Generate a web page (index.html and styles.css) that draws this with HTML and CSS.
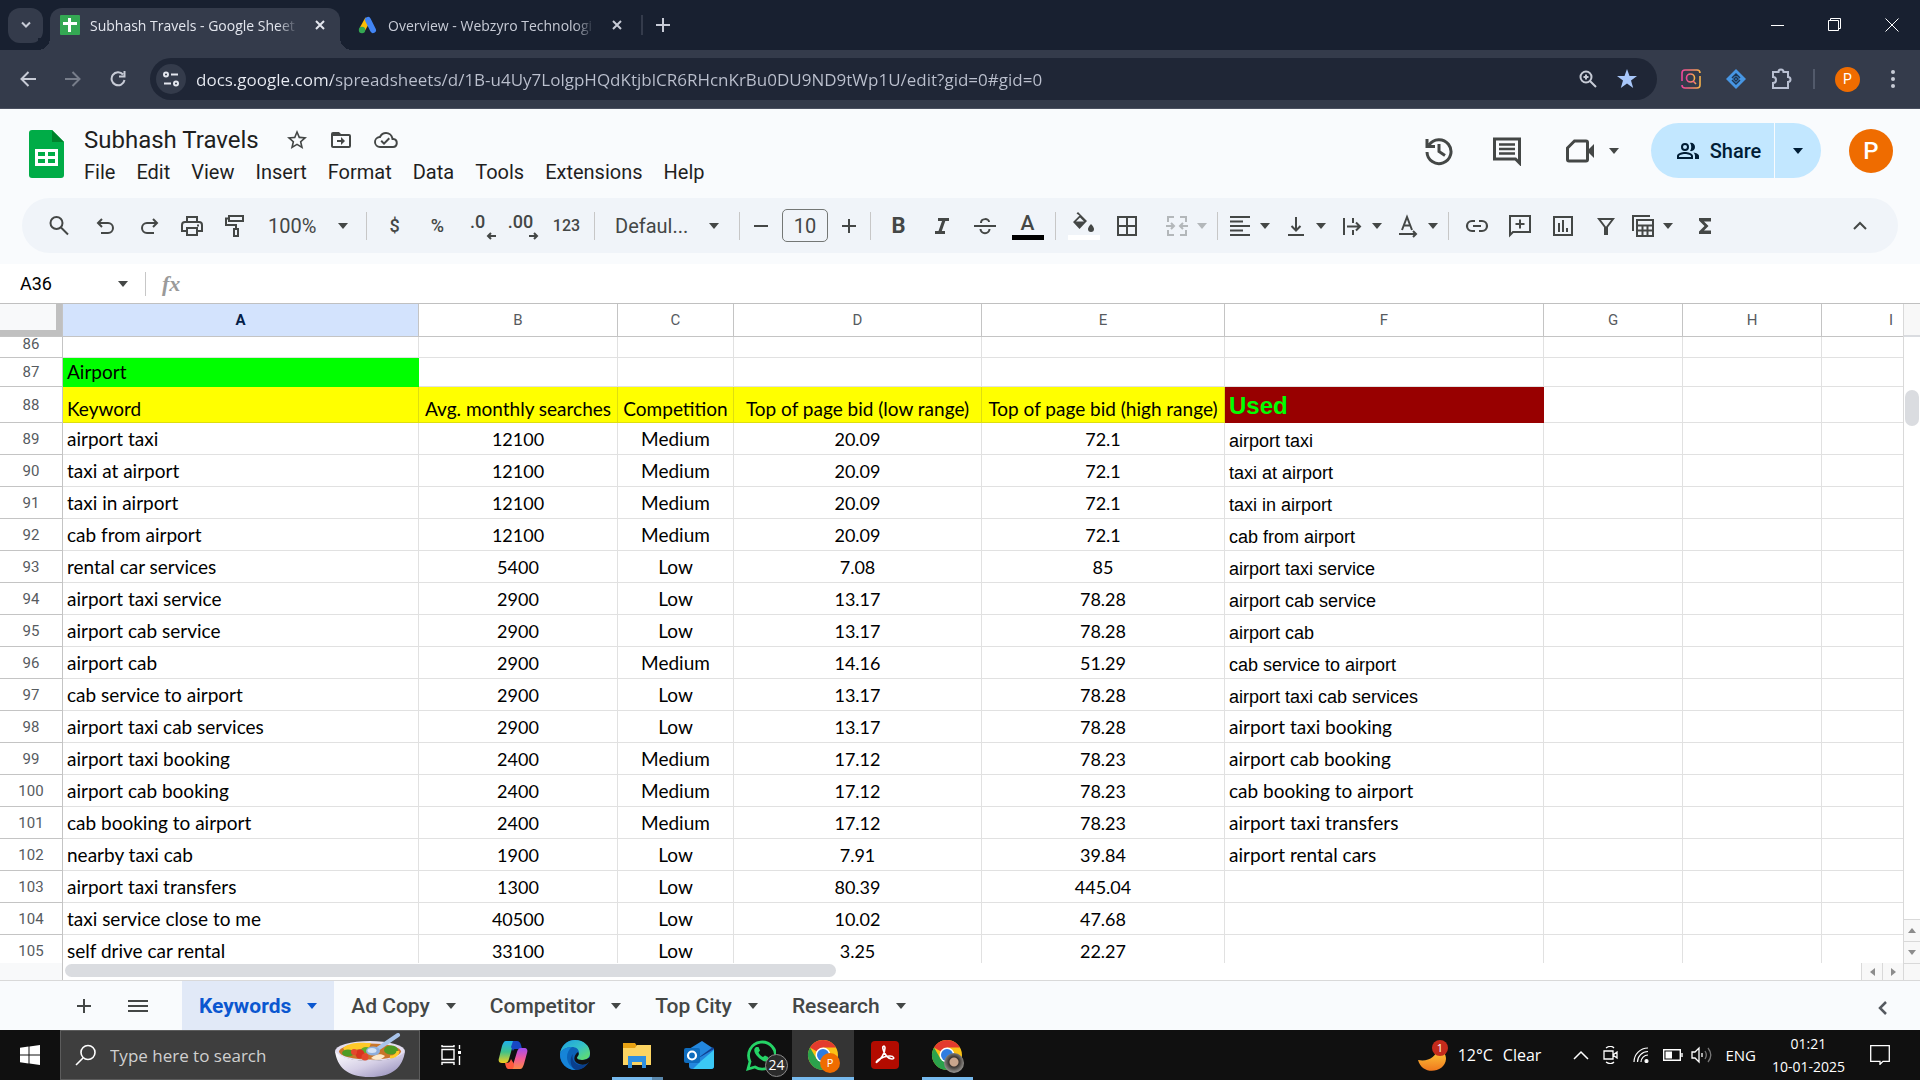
FILE: index.html
```html
<!DOCTYPE html>
<html lang="en">
<head>
  <meta charset="UTF-8" />
  <meta name="viewport" content="width=device-width, initial-scale=1.0" />
  <title>Subhash Travels - Google Sheets</title>
  <link rel="stylesheet" href="styles.css">
</head>
<body>
  <!-- shared icons -->
  <svg class="sprite" aria-hidden="true">
    <symbol id="arrow" viewBox="0 0 10 6"><path d="M0 0h10L5 6z"/></symbol>
    <symbol id="close" viewBox="0 0 10 10"><path d="M1 1l8 8M9 1L1 9" fill="none" stroke="currentColor" stroke-width="2"/></symbol>
    <symbol id="chrome" viewBox="0 0 32 32">
      <circle cx="16" cy="16" r="15" fill="#fbc116"/>
      <path d="M16 16L3 8.500A15 15 0 0 1 29 8.500H16z" fill="#e33b2e"/>
      <path d="M3 8.500A15 15 0 0 0 16 31l6.500-11.300L9.500 19.700z" fill="#2ba24c"/>
      <circle cx="16" cy="16" r="7.500" fill="#fff"/>
      <circle cx="16" cy="16" r="6" fill="#2f7de1"/>
    </symbol>
    <linearGradient id="gEdge" x1="0" y1="0" x2="1" y2="1"><stop offset="0" stop-color="#1b9de2"/><stop offset=".5" stop-color="#35c1c8"/><stop offset="1" stop-color="#6be35a"/></linearGradient>
    <linearGradient id="gBlue" x1="0" y1="0" x2="0" y2="1"><stop offset="0" stop-color="#1fb0ee"/><stop offset=".5" stop-color="#3fc28a"/><stop offset="1" stop-color="#f6cf1d"/></linearGradient>
    <linearGradient id="gPink" x1="0" y1="0" x2="0" y2="1"><stop offset="0" stop-color="#a24df0"/><stop offset=".5" stop-color="#f0599a"/><stop offset="1" stop-color="#fb8a45"/></linearGradient>
    <linearGradient id="gInsta" x1="0" y1="0" x2="1" y2="0"><stop offset="0" stop-color="#f0459a"/><stop offset="1" stop-color="#f7b24a"/></linearGradient>
    <linearGradient id="gMoon" x1="0" y1="0" x2="0" y2="1"><stop offset="0" stop-color="#ffd23c"/><stop offset="1" stop-color="#f0781e"/></linearGradient>
    <linearGradient id="gBowl" x1="0" y1="0" x2="1" y2="1"><stop offset="0" stop-color="#fff"/><stop offset=".5" stop-color="#d5cfe6"/><stop offset="1" stop-color="#8d86b5"/></linearGradient>
  </svg>

  <div class="tabstrip">
    <button class="tab-search" aria-label="Search tabs"><svg width="10" height="8" viewBox="0 0 10 8"><path d="M1 1.500l4 4 4-4" fill="none" stroke="currentColor" stroke-width="2"/></svg></button>
    <div class="browser-tab active">
      <svg width="20" height="20" viewBox="0 0 20 20"><rect width="20" height="20" rx="1" fill="#34a853"/><path d="M9.500 3v14M3 8.500h14" stroke="#fff" stroke-width="3"/></svg>
      <span class="tab-title">Subhash Travels - Google Sheet</span>
      <button class="tab-close" aria-label="Close tab"><svg width="10" height="10"><use href="#close"/></svg></button>
    </div>
    <div class="browser-tab">
      <svg width="20" height="20" viewBox="0 0 20 20"><path d="M10 4L4.500 14" stroke="#fbbc04" stroke-width="6"/><path d="M10 5l5 10" stroke="#4285f4" stroke-width="6" stroke-linecap="round"/><circle cx="4" cy="15" r="3.200" fill="#34a853"/></svg>
      <span class="tab-title">Overview - Webzyro Technologi</span>
      <button class="tab-close" aria-label="Close tab"><svg width="10" height="10"><use href="#close"/></svg></button>
    </div>
    <i class="tab-sep"></i>
    <button class="new-tab" aria-label="New tab"><svg width="14" height="14" viewBox="0 0 14 14"><path d="M7 0v14M0 7h14" stroke="currentColor" stroke-width="2"/></svg></button>
    <div class="window-buttons">
      <button aria-label="Minimize"><svg width="14" height="14" viewBox="0 0 14 14"><path d="M0 7.500h13" stroke="#fff"/></svg></button>
      <button aria-label="Restore"><svg width="14" height="14" viewBox="0 0 14 14"><path d="M.5 2.500h10v10H.5zM2.500 2.500v-2h10v10h-2" fill="none" stroke="#fff"/></svg></button>
      <button aria-label="Close"><svg width="14" height="14" viewBox="0 0 14 14"><path d="M.5.5l13 13M13.500.5l-13 13" stroke="#fff"/></svg></button>
    </div>
  </div>

  <div class="browser-bar">
    <button class="nav-btn" aria-label="Back"><svg width="16" height="16" viewBox="0 0 16 16"><path d="M16 8H2M8.500 1L1.500 8l7 7" fill="none" stroke="currentColor" stroke-width="2"/></svg></button>
    <button class="nav-btn dim" aria-label="Forward"><svg width="16" height="16" viewBox="0 0 16 16"><path d="M0 8h14M7.500 1l7 7-7 7" fill="none" stroke="currentColor" stroke-width="2"/></svg></button>
    <button class="nav-btn" aria-label="Reload"><svg width="16" height="16" viewBox="0 0 16 16"><path d="M13 3.500A6.500 6.500 0 1 0 14.500 9M14.500 0v5.500H9" fill="none" stroke="currentColor" stroke-width="2"/></svg></button>
    <div class="omnibox">
      <button class="site-info" aria-label="Site information"><svg width="16" height="16" viewBox="0 0 16 16" fill="none" stroke="currentColor" stroke-width="2"><circle cx="3" cy="3.500" r="2"/><path d="M8 3.500h7M1 12.500h7"/><circle cx="13" cy="12.500" r="2"/></svg></button>
      <input class="url" aria-label="Address" value="docs.google.com/spreadsheets/d/1B-u4Uy7LolgpHQdKtjblCR6RHcnKrBu0DU9ND9tWp1U/edit?gid=0#gid=0" />
      <button aria-label="Zoom"><svg width="18" height="18" viewBox="0 0 18 18" fill="none" stroke="#c7cbd6" stroke-width="2"><circle cx="7" cy="7" r="5.500"/><path d="M11 11l6 6M7 4.500v5M4.500 7h5"/></svg></button>
      <button aria-label="Bookmark"><svg width="20" height="20" viewBox="0 0 20 20"><path d="M10 0l2.500 7H20l-6 4.500 2.200 7.500L10 14.500 3.800 19 6 11.500 0 7h7.500z" fill="#a8c7fa"/></svg></button>
    </div>
    <div class="extensions">
      <button aria-label="Image search"><svg width="20" height="20" viewBox="0 0 20 20" fill="none" stroke="url(#gInsta)" stroke-width="1.600"><path d="M1 12V4a3 3 0 0 1 3-3h12M19 7v9a3 3 0 0 1-3 3H4a3 3 0 0 1-3-3M16 1a3 3 0 0 1 3 3"/><circle cx="9.500" cy="9" r="4"/><path d="M12 12l3 3"/></svg></button>
      <button aria-label="Tag helper"><svg width="20" height="20" viewBox="0 0 20 20"><path d="M10 0l10 10-10 10L0 10z" fill="#4796e3"/><path d="M6 9l4-4 4 4M6 11l4 4 4-4M8 10l2-2 2 2-2 2z" fill="none" stroke="#1d3653" stroke-width="1.500"/></svg></button>
      <button aria-label="Extensions"><svg width="22" height="22" viewBox="0 0 22 22"><path d="M2 4h5.500a2.500 2.500 0 0 1 5 0H17v5a2.500 2.500 0 0 1 0 5v6H2v-5c4 0 4-6 0-6z" fill="none" stroke="#b9c0d2" stroke-width="2"/></svg></button>
      <i class="ext-sep"></i>
      <button class="profile" aria-label="Profile">P</button>
      <button aria-label="Chrome menu"><svg width="4" height="18" viewBox="0 0 4 18" fill="#b9c0d2"><circle cx="2" cy="2" r="2"/><circle cx="2" cy="9" r="2"/><circle cx="2" cy="16" r="2"/></svg></button>
    </div>
  </div>

  <header>
    <svg class="logo" width="35" height="48" viewBox="0 0 35 48"><path d="M3 0h20l12 12v33a3 3 0 0 1-3 3H3a3 3 0 0 1-3-3V3a3 3 0 0 1 3-3z" fill="#00ac47"/><path d="M23 0l12 12H23z" fill="#00832d"/><path d="M6 19h23v17H6zM9 22v4h7v-4zm10 0v4h7v-4zM9 29v4h7v-4zm10 0v4h7v-4z" fill="#fff" fill-rule="evenodd"/></svg>
    <div class="doc">
      <div class="doc-title">
        <input aria-label="Document name" value="Subhash Travels" />
        <button aria-label="Star"><svg width="24" height="24" viewBox="0 0 24 24"><path d="M22 9.240l-7.190-.62L12 2 9.190 8.630 2 9.240l5.460 4.730L5.820 21 12 17.270 18.180 21l-1.630-7.030zM12 15.400l-3.760 2.270 1-4.280-3.320-2.880 4.380-.38L12 6.100l1.710 4.040 4.380.38-3.320 2.880 1 4.280z"/></svg></button>
        <button aria-label="Move"><svg width="24" height="24" viewBox="0 0 24 24"><path d="M20 6h-8l-2-2H4a2 2 0 0 0-2 2v12c0 1.100.9 2 2 2h16a2 2 0 0 0 2-2V8a2 2 0 0 0-2-2zm0 12H4V8h16z"/><path d="M12 9l4 4-4 4v-3H8v-2h4z"/></svg></button>
        <button aria-label="Document status"><svg width="26" height="24" viewBox="0 0 24 24"><path d="M19.350 10.040A7.490 7.490 0 0 0 12 4a7.500 7.500 0 0 0-6.650 4.040A6 6 0 0 0 6 20h13a5 5 0 0 0 .35-9.960zM19 18H6a4 4 0 0 1-.44-7.980l1.060-.11.500-.95A5.500 5.500 0 0 1 17.390 10.430l.3 1.500 1.530.11A3 3 0 0 1 19 18zm-9-3.800l-2.100-2.100-1.400 1.400L10 17l6-6-1.400-1.400z"/></svg></button>
      </div>
      <nav>
        <button>File</button><button>Edit</button><button>View</button><button>Insert</button><button>Format</button><button>Data</button><button>Tools</button><button>Extensions</button><button>Help</button>
      </nav>
    </div>
    <div class="header-right">
      <button aria-label="History"><svg width="30" height="30" viewBox="0 0 30 30"><path d="M5 9a12 12 0 1 1-2 7M3 3v7.500h8M15 8v7.500l6 4" fill="none" stroke="currentColor" stroke-width="3"/></svg></button>
      <button aria-label="Comments"><svg width="30" height="30" viewBox="0 0 30 30"><path d="M2.500 3h25v24l-4-4h-21z" fill="none" stroke="currentColor" stroke-width="3"/><path d="M7 8.500h16M7 13h16M7 17.500h16" stroke="currentColor" stroke-width="2.500"/></svg></button>
      <button class="meet" aria-label="Meet"><svg width="28" height="24" viewBox="0 0 28 24"><path d="M1.500 9l7-7H20a1.500 1.500 0 0 1 1.500 1.500v17A1.500 1.500 0 0 1 20 22H3a1.500 1.500 0 0 1-1.500-1.500z" fill="none" stroke="currentColor" stroke-width="3"/><path d="M21 12l7-7v14z"/></svg><svg width="10" height="6"><use href="#arrow"/></svg></button>
      <div class="share">
        <button class="share-main"><svg width="24" height="24" viewBox="0 0 24 24"><path d="M9 4a4 4 0 1 0 0 8 4 4 0 0 0 0-8zm0 2a2 2 0 1 1 0 4 2 2 0 0 1 0-4zm0 7c-2.700 0-8 1.300-8 4v3h16v-3c0-2.700-5.300-4-8-4zm6 5H3v-1c0-.6 3.100-2 6-2s6 1.400 6 2zM14 4c2.500-.7 5 1.300 5 4s-2.500 4.700-5 4c1.700-2 1.700-6 0-8zm3.500 9.500c2.700.5 5.500 1.700 5.500 3.500v3h-4v-3c0-1.500-.6-2.600-1.500-3.500z"/></svg>Share</button>
        <button class="share-more" aria-label="Share options"><svg width="10" height="6"><use href="#arrow"/></svg></button>
      </div>
      <button class="avatar" aria-label="Account">P</button>
    </div>
  </header>

  <div class="toolbar">
    <button class="tool wide" aria-label="Search menus"><svg width="24" height="24" viewBox="0 0 24 24" fill="none" stroke="currentColor" stroke-width="2"><circle cx="9.500" cy="9" r="6"/><path d="M14 13.500l7 7"/></svg></button>
    <button class="tool" aria-label="Undo"><svg width="24" height="24" viewBox="0 0 24 24" fill="none" stroke="currentColor" stroke-width="2"><path d="M8 5L4 9l4 4M4 9h10a5 5 0 0 1 0 10H7"/></svg></button>
    <button class="tool" aria-label="Redo"><svg width="24" height="24" viewBox="0 0 24 24" fill="none" stroke="currentColor" stroke-width="2"><path d="M16 5l4 4-4 4M20 9H10a5 5 0 0 0 0 10h7"/></svg></button>
    <button class="tool" aria-label="Print"><svg width="24" height="24" viewBox="0 0 24 24" fill="none" stroke="currentColor" stroke-width="2"><path d="M7 8V3h10v5M7 17H2v-6c0-2 1-3 3-3h14c2 0 3 1 3 3v6h-5M7 14h10v7H7z"/><path d="M17 11.500h2"/></svg></button>
    <button class="tool" aria-label="Paint format"><svg width="24" height="24" viewBox="0 0 24 24" fill="none" stroke="currentColor" stroke-width="2"><path d="M6 2h14v5H6zM6 4.500H3V11h10v4M11 15h4v7h-4z"/></svg></button>
    <button class="menu-btn zoom">100%<svg width="10" height="6"><use href="#arrow"/></svg></button>
    <i class="sep"></i>
    <button class="tool">$</button>
    <button class="tool">%</button>
    <button class="tool decimals" aria-label="Decrease decimal places">.0<svg width="10" height="8" viewBox="0 0 10 8"><path d="M10 4H2M5 1L2 4l3 3" fill="none" stroke="currentColor" stroke-width="2"/></svg></button>
    <button class="tool decimals" aria-label="Increase decimal places">.00<svg width="10" height="8" viewBox="0 0 10 8"><path d="M0 4h8M5 1l3 3-3 3" fill="none" stroke="currentColor" stroke-width="2"/></svg></button>
    <button class="tool small">123</button>
    <i class="sep"></i>
    <button class="menu-btn font">Defaul...<svg width="10" height="6"><use href="#arrow"/></svg></button>
    <i class="sep"></i>
    <button class="step" aria-label="Decrease font size"><svg width="14" height="14" viewBox="0 0 14 14"><path d="M0 7h14" stroke="currentColor" stroke-width="2"/></svg></button>
    <input class="font-size" aria-label="Font size" value="10" />
    <button class="step" aria-label="Increase font size"><svg width="14" height="14" viewBox="0 0 14 14"><path d="M0 7h14M7 0v14" stroke="currentColor" stroke-width="2"/></svg></button>
    <i class="sep"></i>
    <button class="tool bold" aria-label="Bold">B</button>
    <button class="tool" aria-label="Italic"><svg width="24" height="24" viewBox="0 0 24 24"><path d="M8 4h11v3h-3.700l-3.500 10H15v3H5v-3h3.500L12 7H8z"/></svg></button>
    <button class="tool" aria-label="Strikethrough"><svg width="24" height="24" viewBox="0 0 24 24" fill="none" stroke="currentColor" stroke-width="2"><path d="M1 12h22M8 9c0-5 8-5 8-1M7.500 15c0 5.500 9 5.500 9 0"/></svg></button>
    <button class="tool swatch black" aria-label="Text color">A</button>
    <i class="sep"></i>
    <button class="tool swatch white" aria-label="Fill color"><svg width="24" height="22" viewBox="0 0 24 22"><path d="M6 0l9 9-7.500 8L1 10l6.500-6.500L4.500 1.500z"/><path d="M8 5.500L4 9.500h8z" fill="#f0f4f9"/><path d="M19 12s3 3 3 5a3 3 0 0 1-6 0c0-2 3-5 3-5z"/></svg></button>
    <button class="tool" aria-label="Borders"><svg width="24" height="24" viewBox="0 0 24 24"><path d="M3 3h18v18H3zM12 3v18M3 12h18" fill="none" stroke="currentColor" stroke-width="2"/></svg></button>
    <div class="drops merge">
      <button class="drop" aria-label="Merge cells" disabled><svg width="24" height="24" viewBox="0 0 24 24" fill="none" stroke="currentColor" stroke-width="2"><path d="M9 3H3v5M3 16v5h6M15 3h6v5M21 16v5h-6M1 12h8M6 9l3 3-3 3M23 12h-8M18 9l-3 3 3 3"/></svg><svg width="10" height="6"><use href="#arrow"/></svg></button>
    </div>
    <i class="sep"></i>
    <div class="drops">
      <button class="drop" aria-label="Horizontal align"><svg width="24" height="24" viewBox="0 0 24 24"><path d="M2 3h20M2 7.500h13M2 12h20M2 16.500h13M2 21h20" stroke="currentColor" stroke-width="2"/></svg><svg width="10" height="6"><use href="#arrow"/></svg></button>
      <button class="drop" aria-label="Vertical align"><svg width="24" height="24" viewBox="0 0 24 24" fill="none" stroke="currentColor" stroke-width="2"><path d="M12 3v13M7.500 12l4.500 4.500 4.500-4.500M4 21h16"/></svg><svg width="10" height="6"><use href="#arrow"/></svg></button>
      <button class="drop" aria-label="Text wrapping"><svg width="24" height="24" viewBox="0 0 24 24" fill="none" stroke="currentColor" stroke-width="2"><path d="M4 4v17M13 4v5M13 16v5M7 12.500h12M16 8.500l4 4-4 4"/></svg><svg width="10" height="6"><use href="#arrow"/></svg></button>
      <button class="drop" aria-label="Text rotation"><svg width="24" height="24" viewBox="0 0 24 24" fill="none" stroke="currentColor" stroke-width="2"><path d="M6 16l5-13 5 13M8 11.500h6M3 20h17M17 17l3 3-3 3"/></svg><svg width="10" height="6"><use href="#arrow"/></svg></button>
    </div>
    <i class="sep"></i>
    <button class="tool" aria-label="Insert link"><svg width="24" height="24" viewBox="0 0 24 24" fill="none" stroke="currentColor" stroke-width="2.200"><path d="M10 17H7A5 5 0 0 1 7 7h3M14 7h3a5 5 0 0 1 0 10h-3M8 12h8"/></svg></button>
    <button class="tool" aria-label="Insert comment"><svg width="24" height="24" viewBox="0 0 24 24" fill="none" stroke="currentColor" stroke-width="2"><path d="M2 2h20v16H5l-3 3zM12 5.500v9M7.500 10h9"/></svg></button>
    <button class="tool" aria-label="Insert chart"><svg width="24" height="24" viewBox="0 0 24 24" fill="none" stroke="currentColor" stroke-width="2"><path d="M3 3h18v18H3zM8 9v9M12 6v12M16 14v4"/></svg></button>
    <button class="tool" aria-label="Create a filter"><svg width="24" height="24" viewBox="0 0 24 24" fill="none" stroke="currentColor" stroke-width="2"><path d="M5 5h14l-6 8v7h-2v-7z"/></svg></button>
    <div class="drops">
      <button class="drop" aria-label="Table views"><svg width="24" height="24" viewBox="0 0 24 24" fill="none" stroke="currentColor" stroke-width="2"><path d="M2 17V2h17M6 6h16v16H6zM6 11.500h16M6 16.500h16M11.500 11.500V22M16.500 11.500V22"/></svg><svg width="10" height="6"><use href="#arrow"/></svg></button>
    </div>
    <button class="tool functions" aria-label="Functions"><svg width="24" height="24" viewBox="0 0 24 24"><path d="M6 4h12v3.500h-7l4.500 4.500-4.500 4.500h7V20H6v-2.500l5.500-5.500L6 6.500z"/></svg></button>
    <button class="tool collapse" aria-label="Hide the menus"><svg width="14" height="9" viewBox="0 0 14 9"><path d="M1 8l6-6 6 6" fill="none" stroke="currentColor" stroke-width="2"/></svg></button>
  </div>

  <div class="formula-bar">
    <input class="name-box" aria-label="Name box" value="A36" />
    <button aria-label="Named ranges"><svg width="10" height="6"><use href="#arrow"/></svg></button>
    <label class="fx" for="formula">fx</label>
    <input id="formula" class="formula" />
  </div>

  <main>
    <div class="grid">
      <table>
        <colgroup>
          <col class="c-num"><col class="c-a"><col class="c-b"><col class="c-c"><col class="c-d"><col class="c-e"><col class="c-f"><col class="c-g"><col class="c-g"><col class="c-g">
        </colgroup>
        <thead>
          <tr><th class="corner"></th><th class="selected">A</th><th>B</th><th>C</th><th>D</th><th>E</th><th>F</th><th>G</th><th>H</th><th>I</th></tr>
        </thead>
        <tbody>
          <tr class="cut"><th>86</th><td></td><td></td><td></td><td></td><td></td><td></td><td></td><td></td><td></td></tr>
          <tr class="section"><th>87</th><td class="green">Airport</td><td></td><td></td><td></td><td></td><td></td><td></td><td></td><td></td></tr>
          <tr class="heading"><th>88</th><td>Keyword</td><td>Avg. monthly searches</td><td>Competition</td><td>Top of page bid (low range)</td><td>Top of page bid (high range)</td><td class="used">Used</td><td></td><td></td><td></td></tr>
          <tr><th>89</th><td>airport taxi</td><td>12100</td><td>Medium</td><td>20.09</td><td>72.1</td><td class="arial">airport taxi</td><td></td><td></td><td></td></tr>
          <tr><th>90</th><td>taxi at airport</td><td>12100</td><td>Medium</td><td>20.09</td><td>72.1</td><td class="arial">taxi at airport</td><td></td><td></td><td></td></tr>
          <tr><th>91</th><td>taxi in airport</td><td>12100</td><td>Medium</td><td>20.09</td><td>72.1</td><td class="arial">taxi in airport</td><td></td><td></td><td></td></tr>
          <tr><th>92</th><td>cab from airport</td><td>12100</td><td>Medium</td><td>20.09</td><td>72.1</td><td class="arial">cab from airport</td><td></td><td></td><td></td></tr>
          <tr><th>93</th><td>rental car services</td><td>5400</td><td>Low</td><td>7.08</td><td>85</td><td class="arial">airport taxi service</td><td></td><td></td><td></td></tr>
          <tr><th>94</th><td>airport taxi service</td><td>2900</td><td>Low</td><td>13.17</td><td>78.28</td><td class="arial">airport cab service</td><td></td><td></td><td></td></tr>
          <tr><th>95</th><td>airport cab service</td><td>2900</td><td>Low</td><td>13.17</td><td>78.28</td><td class="arial">airport cab</td><td></td><td></td><td></td></tr>
          <tr><th>96</th><td>airport cab</td><td>2900</td><td>Medium</td><td>14.16</td><td>51.29</td><td class="arial">cab service to airport</td><td></td><td></td><td></td></tr>
          <tr><th>97</th><td>cab service to airport</td><td>2900</td><td>Low</td><td>13.17</td><td>78.28</td><td class="arial">airport taxi cab services</td><td></td><td></td><td></td></tr>
          <tr><th>98</th><td>airport taxi cab services</td><td>2900</td><td>Low</td><td>13.17</td><td>78.28</td><td>airport taxi booking</td><td></td><td></td><td></td></tr>
          <tr><th>99</th><td>airport taxi booking</td><td>2400</td><td>Medium</td><td>17.12</td><td>78.23</td><td>airport cab booking</td><td></td><td></td><td></td></tr>
          <tr><th>100</th><td>airport cab booking</td><td>2400</td><td>Medium</td><td>17.12</td><td>78.23</td><td>cab booking to airport</td><td></td><td></td><td></td></tr>
          <tr><th>101</th><td>cab booking to airport</td><td>2400</td><td>Medium</td><td>17.12</td><td>78.23</td><td>airport taxi transfers</td><td></td><td></td><td></td></tr>
          <tr><th>102</th><td>nearby taxi cab</td><td>1900</td><td>Low</td><td>7.91</td><td>39.84</td><td>airport rental cars</td><td></td><td></td><td></td></tr>
          <tr><th>103</th><td>airport taxi transfers</td><td>1300</td><td>Low</td><td>80.39</td><td>445.04</td><td></td><td></td><td></td><td></td></tr>
          <tr><th>104</th><td>taxi service close to me</td><td>40500</td><td>Low</td><td>10.02</td><td>47.68</td><td></td><td></td><td></td><td></td></tr>
          <tr><th>105</th><td>self drive car rental</td><td>33100</td><td>Low</td><td>3.25</td><td>22.27</td><td></td><td></td><td></td><td></td></tr>
        </tbody>
      </table>
    </div>
    <div class="vscroll">
      <div class="vscroll-top"></div>
      <div class="vscroll-track"><div class="vthumb"></div></div>
      <button aria-label="Scroll up"><svg width="8" height="5" viewBox="0 0 10 6"><path d="M0 6h10L5 0z"/></svg></button>
      <button aria-label="Scroll down"><svg width="8" height="5" viewBox="0 0 10 6"><use href="#arrow"/></svg></button>
    </div>
    <div class="hscroll">
      <div class="hscroll-start"></div>
      <div class="hscroll-track"><div class="hthumb"></div></div>
      <button aria-label="Scroll left"><svg width="5" height="8" viewBox="0 0 5 8"><path d="M5 0v8L0 4z"/></svg></button>
      <button aria-label="Scroll right"><svg width="5" height="8" viewBox="0 0 5 8"><path d="M0 0v8l5-4z"/></svg></button>
    </div>
    <div class="scroll-corner"></div>
  </main>

  <footer class="sheet-bar">
    <button class="sheet-btn" aria-label="Add sheet"><svg width="16" height="16" viewBox="0 0 16 16"><path d="M8 1v14M1 8h14" stroke="currentColor" stroke-width="2"/></svg></button>
    <button class="sheet-btn" aria-label="All sheets"><svg width="20" height="14" viewBox="0 0 20 14"><path d="M0 2h20M0 7h20M0 12h20" stroke="currentColor" stroke-width="2"/></svg></button>
    <div class="sheets">
      <button class="sheet-tab current">Keywords<svg width="10" height="6"><use href="#arrow"/></svg></button>
      <button class="sheet-tab">Ad Copy<svg width="10" height="6"><use href="#arrow"/></svg></button>
      <button class="sheet-tab">Competitor<svg width="10" height="6"><use href="#arrow"/></svg></button>
      <button class="sheet-tab">Top City<svg width="10" height="6"><use href="#arrow"/></svg></button>
      <button class="sheet-tab">Research<svg width="10" height="6"><use href="#arrow"/></svg></button>
    </div>
    <button class="side-toggle" aria-label="Show side panel"><svg width="9" height="14" viewBox="0 0 9 14"><path d="M8 1L2 7l6 6" fill="none" stroke="#555a60" stroke-width="2.500"/></svg></button>
  </footer>

  <div class="taskbar">
    <button class="start" aria-label="Start"><svg width="20" height="20" viewBox="0 0 20 20" fill="#fff"><path d="M0 2.800L8.500 1.600v8H0zM9.500 1.500L20 0v9.600H9.500zM0 10.500h8.500v8L0 17.300zM9.500 10.500H20V20L9.500 18.600z"/></svg></button>
    <div class="search">
      <svg width="22" height="22" viewBox="0 0 22 22"><path d="M8 14L1 21" stroke="#fff" stroke-width="1.600"/><circle cx="13" cy="8.500" r="7" fill="none" stroke="#fff" stroke-width="1.600"/></svg>
      <input aria-label="Search" placeholder="Type here to search" />
      <svg width="70" height="44" viewBox="0 0 70 44">
        <ellipse cx="35" cy="18" rx="35" ry="10" fill="#e3def0"/>
        <path d="M0 18c2 16 12 26 35 26s33-10 35-26c-8 13-62 13-70 0z" fill="url(#gBowl)"/>
        <ellipse cx="35" cy="18.500" rx="31" ry="8" fill="#c9752a"/>
        <path d="M8 15c8-7 20-5 28-5l-2 5-24 3z" fill="#ffc928"/>
        <ellipse cx="13" cy="20" rx="6" ry="3.500" fill="#4f9b24"/><ellipse cx="56" cy="17" rx="7" ry="4.500" fill="#4f9b24"/><ellipse cx="31" cy="17" rx="5" ry="3" fill="#5fae2c"/>
        <circle cx="25" cy="21" r="4.500" fill="#d8331f"/><circle cx="30" cy="24" r="3.500" fill="#e4482d"/><circle cx="19" cy="19" r="3" fill="#e4482d"/>
        <path d="M36 25c4-4 10-5 14-2-3 4-9 5-14 2z" fill="#fde9c8"/><path d="M55 24c5 0 8-3 8-6" fill="none" stroke="#ffc928" stroke-width="3"/>
        <path d="M41 17L63 2" stroke="#a9c4ea" stroke-width="4" stroke-linecap="round"/><ellipse cx="38" cy="18" rx="7" ry="4.500" fill="#8eafdd"/><ellipse cx="37" cy="17.500" rx="4.500" ry="2.500" fill="#d5e3f6"/>
      </svg>
    </div>
    <div class="apps">
      <button aria-label="Task View"><svg width="20" height="20" viewBox="0 0 20 20" fill="none" stroke="#fff" stroke-width="1.400"><path d="M1 4.500h12v10H1zM1 0v1.500h12V0M1 20v-2.500h12V20M18.500 0v4M18.500 11v9"/><path d="M17 7.500h3" stroke-width="3"/></svg></button>
      <button aria-label="Copilot"><svg width="30" height="30" viewBox="0 0 30 30"><path d="M8 1h11c-2 0-3 1-4 4l-4 14c-1 3-2 4-4 4H4c-3 0-4-2-3-5L4 6c1-3 2-5 4-5z" fill="url(#gBlue)"/><path d="M15 1h4c2 0 3 1 4 4l1 4h-6c-2 0-2 0-3 2l-2-4z" fill="#1747c4"/><path d="M22 29H11c2 0 3-1 4-4l4-13c1-3 2-4 4-4h3c3 0 4 2 3 5l-3 11c-1 3-2 5-4 5z" fill="url(#gPink)"/><path d="M14 29h-3c-2 0-3-1-4-6h2c2 0 3-1 4-4l3 5c0 3-1 5-2 5z" fill="#ff5a3d"/></svg></button>
      <button aria-label="Microsoft Edge"><svg width="30" height="30" viewBox="0 0 30 30"><circle cx="15" cy="15" r="15" fill="#0b62b8"/><path d="M0 14C1 6 7 0 15 0c9 0 15 6 15 13 0 5-4 7-8 7-3 0-5-1-5-2 0-2 2-2 2-5 0-4-3-6-7-6C6 7 1 10 0 14z" fill="url(#gEdge)"/><path d="M0 14c1-4 6-7 12-7-3 2-5 6-5 10 0 6 4 11 10 12.800C8 31 0 24 0 14z" fill="#1684d8"/><path d="M13 14c-2 5 2 11 8 11 3 0 6-1 7-3l1 0c-3 5-8 8-13 8-6-2-7-12-3-16z" fill="#0a3f8c"/><path d="M18 12c2 3-1 4-1 6 0 1 2 2 5 2 3 0 6-1 8-3v4l-2 2c-3 2-6 2-9 1-6-2-6-8-1-12z" fill="#111"/></svg></button>
      <button class="open stacked" aria-label="File Explorer"><svg width="28" height="26" viewBox="0 0 28 26"><path d="M0 1h12l2 3h14v19H0z" fill="#e8a213"/><path d="M0 6h12l2-3h14v20H0z" fill="#fcd462"/><path d="M5 14h18v12h-4v-6H9v6H5z" fill="#2f8fe0"/></svg></button>
      <button aria-label="Outlook"><svg width="30" height="28" viewBox="0 0 30 28"><path d="M5 8L18 0l12 8v17a3 3 0 0 1-3 3H8a3 3 0 0 1-3-3z" fill="#2387dd"/><path d="M13 18L30 8l-1-2-11 8z" fill="#103f91"/><path d="M30 9v16a3 3 0 0 1-3 3H9l8-8z" fill="#3bc8f5"/><rect y="7" width="16" height="15" rx="2" fill="#0f6cbd"/><circle cx="8" cy="14.500" r="4" fill="none" stroke="#fff" stroke-width="2.200"/></svg></button>
      <button class="whatsapp" aria-label="WhatsApp"><svg width="30" height="32" viewBox="0 0 30 32"><path d="M2 30l2-7.500A13.500 13.500 0 1 1 9 28z" fill="none" stroke="#25d366" stroke-width="2.800"/><path d="M10 8c-3 2-2 6 2 10s8 6 11 3l-1-3-3-1.500-2 1.500c-2-1-3.500-2.500-4.500-4.500l1.500-2L12.500 8z" fill="#25d366"/></svg><span class="count">24</span></button>
      <button class="open focused" aria-label="Chrome"><svg width="32" height="32"><use href="#chrome"/></svg><span class="mini">P</span></button>
      <button aria-label="Acrobat"><svg width="28" height="28" viewBox="0 0 28 28"><rect width="28" height="28" rx="4" fill="#b30b00"/><path d="M6 21c3-2 8-8 8-14 0-3-3-2-2 1 1 5 5 10 9 10 3 0 2-3-2-3-5 0-9 2-12 4-2 2-2 3-1 2z" fill="none" stroke="#fff" stroke-width="1.600"/></svg></button>
      <button class="open" aria-label="Chrome, second profile"><svg width="32" height="32"><use href="#chrome"/></svg><span class="mini photo"></span></button>
    </div>
    <div class="tray">
      <button class="weather"><svg width="30" height="31" viewBox="0 0 30 31"><path d="M0 20c10 2 19-3 19-12 6 2 9 6 9 11C27 33 4 36 0 20z" fill="url(#gMoon)"/><circle cx="22" cy="8" r="8" fill="#c42b1c"/><text x="22" y="12" fill="#fff" font-size="11" text-anchor="middle">1</text></svg><span>12°C</span><span>Clear</span></button>
      <button aria-label="Hidden icons"><svg width="16" height="10" viewBox="0 0 16 10"><path d="M1 9l7-7 7 7" fill="none" stroke="#fff" stroke-width="1.500"/></svg></button>
      <button aria-label="Meet Now"><svg width="16" height="18" viewBox="0 0 16 18" fill="none" stroke="#fff" stroke-width="1.300"><path d="M1 5h9v8H1zM10 9l4-3v6zM3 2c3-2 6-2 8 0M3 16c3 2 6 2 8 0"/></svg></button>
      <button aria-label="Network"><svg width="16" height="16" viewBox="0 0 16 16" fill="none" stroke="#fff" stroke-width="1.200"><path d="M1 15A14 14 0 0 1 15 1M4.500 15A10.500 10.500 0 0 1 15 4.500M8 15a7 7 0 0 1 7-7"/><circle cx="13.500" cy="14" r="1.500" fill="#fff"/></svg></button>
      <button aria-label="Battery"><svg width="20" height="12" viewBox="0 0 20 12"><path d="M.7.7h16.600v10.600H.7zM19 4v4" fill="none" stroke="#fff" stroke-width="1.400"/><path d="M2.500 2.500H9v7H2.500z" fill="#fff"/></svg></button>
      <button class="volume" aria-label="Volume"><svg width="22" height="18" viewBox="0 0 22 18" fill="none" stroke="#fff" stroke-width="1.300"><path d="M1 6h3l4-4v14l-4-4H1zM11 7v4"/><path d="M14 5c2 3 2 5 0 8M17 2c4 5 4 9 0 14" stroke="#777"/></svg></button>
      <button class="lang">ENG</button>
      <button class="clock"><span>01:21</span><span>10-01-2025</span></button>
      <button aria-label="Notifications"><svg width="20" height="20" viewBox="0 0 20 20"><path d="M.7.7h18.600v15.600H13l-3 3v-3H.7z" fill="none" stroke="#fff" stroke-width="1.300"/></svg></button>
    </div>
  </div>
</body>
</html>
```
FILE: styles.css
```css
* {
  box-sizing: border-box;
}
body {
  margin: 0;
  height: 100vh;
  display: flex;
  flex-direction: column;
  overflow: hidden;
  font-family: Roboto, Arial, sans-serif;
  background-color: #f9fbfd;
  color: #444746;
}
button, input {
  border: 0;
  padding: 0;
  margin: 0;
  background: none;
  font: inherit;
  color: inherit;
  outline: none;
}
button {
  display: flex;
  align-items: center;
  justify-content: center;
  flex-shrink: 0;
  white-space: nowrap;
  cursor: pointer;
}
svg {
  fill: currentColor;
  flex-shrink: 0;
}
svg[fill="none"] {
  fill: none;
}
svg[fill="#fff"] {
  fill: #fff;
}
.sprite {
  position: absolute;
  width: 0;
  height: 0;
}

/* browser window */
.tabstrip {
  display: flex;
  align-items: center;
  height: 50px;
  padding-left: 8px;
  background-color: #182030;
  color: #c7cbd6;
  font-family: "Open Sans", "Segoe UI", sans-serif;
  font-size: 14px;
  flex-shrink: 0;
}
.tab-search {
  width: 35px;
  height: 35px;
  margin-right: 7px;
  border-radius: 12px;
  background-color: #343b4b;
}
.browser-tab {
  position: relative;
  display: flex;
  align-items: center;
  width: 297px;
  height: 42px;
  margin-top: 8px;
  padding: 0 8px 8px 18px;
  gap: 10px;
}
.browser-tab.active {
  width: 290px;
  padding-left: 10px;
  background-color: #343b4b;
  border-radius: 12px 12px 0 0;
  color: #e3e6ee;
}
.browser-tab.active::before, .browser-tab.active::after {
  content: "";
  position: absolute;
  bottom: 0;
  left: -12px;
  width: 12px;
  height: 12px;
  background: radial-gradient(circle at 0 0, #182030 12px, #343b4b 12px);
}
.browser-tab.active::after {
  left: auto;
  right: -12px;
  background: radial-gradient(circle at 100% 0, #182030 12px, #343b4b 12px);
}
.tab-title {
  flex: 1;
  overflow: hidden;
  white-space: nowrap;
  mask-image: linear-gradient(90deg, #000 90%, transparent);
}
.tab-close {
  width: 24px;
  height: 24px;
}
.tab-sep {
  width: 2px;
  height: 20px;
  margin-left: 4px;
  background-color: #343b4b;
}
.new-tab {
  width: 40px;
  height: 36px;
}
.window-buttons {
  display: flex;
  margin-left: auto;
}
.window-buttons button {
  width: 57px;
  height: 50px;
}
.browser-bar {
  display: flex;
  align-items: center;
  height: 59px;
  padding-left: 8px;
  background-color: #343b4b;
  border-bottom: 1px solid #4a5060;
  color: #c7cbd6;
  flex-shrink: 0;
}
.nav-btn {
  width: 40px;
  height: 40px;
  margin-right: 5px;
}
.nav-btn.dim {
  color: #777d8a;
}
.omnibox {
  display: flex;
  align-items: center;
  flex: 1;
  height: 42px;
  margin-left: 7px;
  padding: 0 20px 0 6px;
  gap: 20px;
  border-radius: 21px;
  background-color: #1f2636;
}
.site-info {
  width: 30px;
  height: 30px;
  margin-right: -10px;
  border-radius: 15px;
  background-color: #343b4b;
  color: #e3e6ee;
}
.url {
  flex: 1;
  min-width: 0;
  font-family: "Open Sans", "Segoe UI", sans-serif;
  font-size: 17px;
  color: transparent;
  background: linear-gradient(90deg, #e9ecf4 136px, #bcc1cf 136px);
  background-clip: text;
}
.extensions {
  display: flex;
  align-items: center;
  gap: 25px;
  padding: 0 25px 0 24px;
}
.ext-sep {
  width: 2px;
  height: 20px;
  background-color: #525a6b;
  margin: 0 -5px;
}
.profile {
  width: 25px;
  height: 25px;
  margin-right: 6px;
  border-radius: 50%;
  background-color: #ef6c00;
  color: #fff;
  font-size: 14px;
}

/* document header */
header {
  display: flex;
  align-items: center;
  height: 89px;
  padding: 0 27px 0 29px;
  flex-shrink: 0;
}
.logo {
  margin: 0 10px 0 0;
}
.doc {
  margin-top: 5px;
}
.doc-title {
  display: flex;
  align-items: center;
  gap: 20px;
  height: 32px;
  padding-left: 10px;
}
.doc-title input {
  width: 181px;
  font-size: 24px;
  color: #1f1f1f;
}
nav {
  display: flex;
  gap: 1px;
}
nav button {
  height: 32px;
  padding: 0 10px;
  font-size: 20px;
  color: #1f1f1f;
}
.header-right {
  display: flex;
  align-items: center;
  gap: 38px;
  margin: -6px 0 0 auto;
}
.meet {
  gap: 15px;
  margin-left: 6px;
}
.share {
  display: flex;
  gap: 1px;
  margin-left: -6px;
  color: #001d35;
  font-size: 20px;
  font-weight: 500;
}
.share button {
  height: 55px;
  background-color: #c2e7ff;
}
.share-main {
  width: 123px;
  gap: 10px;
  border-radius: 28px 0 0 28px;
  padding-left: 12px;
}
.share-more {
  width: 46px;
  border-radius: 0 28px 28px 0;
}
.avatar {
  width: 44px;
  height: 44px;
  margin-left: -10px;
  border-radius: 50%;
  background-color: #ef6c00;
  color: #fff;
  font-size: 24px;
  font-weight: 500;
}

/* toolbar */
.toolbar {
  display: flex;
  align-items: center;
  height: 55px;
  margin: 0 22px 11px;
  padding: 0 17px 0 12px;
  border-radius: 28px;
  background-color: #f0f4f9;
  font-size: 20px;
  flex-shrink: 0;
}
.tool {
  position: relative;
  width: 43px;
  height: 38px;
  font-size: 18px;
  font-weight: 500;
}
.tool.wide {
  width: 50px;
}
.tool.small {
  font-size: 16px;
}
.tool.bold {
  font-size: 22px;
  font-weight: 700;
}
.decimals {
  padding: 0 6px 8px 0;
}
.decimals svg {
  position: absolute;
  right: 6px;
  bottom: 5px;
}
.menu-btn {
  justify-content: space-between;
  height: 38px;
}
.zoom {
  width: 104px;
  padding: 0 12px;
}
.font {
  width: 132px;
  padding: 0 14px;
  font-size: 20px;
}
.sep {
  width: 1px;
  height: 28px;
  margin: 0 6px;
  background-color: #c7c7c7;
  flex-shrink: 0;
}
.step {
  width: 30px;
  height: 38px;
}
.font-size {
  width: 46px;
  height: 33px;
  margin: 0 6px;
  border: 1px solid #747775;
  border-radius: 5px;
  text-align: center;
}
.swatch {
  padding-bottom: 6px;
  font-size: 21px;
}
.swatch::after {
  content: "";
  position: absolute;
  bottom: 0;
  width: 32px;
  height: 5px;
  margin-bottom: 5px;
  background-color: #000;
}
.swatch.white::after {
  background-color: #fff;
}
.drops {
  display: flex;
  gap: 6px;
}
.drops.merge {
  margin-left: 13px;
}
.drop {
  width: 50px;
  height: 38px;
  gap: 8px;
}
.drop:disabled {
  color: #b3b7ba;
}
.functions {
  margin-left: 6px;
}
.collapse {
  margin-left: auto;
}

/* formula bar */
.formula-bar {
  display: flex;
  align-items: center;
  height: 40px;
  padding-left: 20px;
  border-bottom: 1px solid #c0c0c0;
  background-color: #fff;
  flex-shrink: 0;
}
.name-box {
  width: 98px;
  font-size: 18px;
  color: #000;
}
.fx {
  margin-left: 17px;
  padding-left: 16px;
  border-left: 1px solid #c7c7c7;
  font: italic bold 22px/24px "Liberation Serif", serif;
  color: #9a9a9a;
}
.formula {
  flex: 1;
}

/* grid */
main {
  display: grid;
  grid-template: minmax(0, 1fr) 17px / minmax(0, 1fr) 17px;
  flex: 1;
  min-height: 0;
  background-color: #fff;
  border-bottom: 1px solid #d9d9d9;
}
.grid {
  overflow: hidden;
}
table {
  table-layout: fixed;
  width: 1960px;
  border-spacing: 0;
  font-family: Lato, Calibri, sans-serif;
  font-size: 18px;
  line-height: 22px;
  color: #000;
}
.c-num { width: 63px; }
.c-a { width: 356px; }
.c-b { width: 199px; }
.c-c { width: 116px; }
.c-d { width: 248px; }
.c-e { width: 243px; }
.c-f { width: 319px; }
.c-g { width: 139px; }
th, td {
  height: 32px;
  padding: 0 4px;
  border: 0 solid #e1e1e1;
  border-width: 0 1px 1px 0;
  text-align: center;
  white-space: nowrap;
}
th {
  border-color: #c4c4c4;
  font-family: Roboto, sans-serif;
  font-size: 15px;
  font-weight: 400;
  line-height: 18px;
  color: #575b5f;
}
thead th {
  height: 33px;
}
.corner {
  background-color: #f8f9fa;
  box-shadow: inset -6px -6px #c0c0c0;
}
.selected {
  background-color: #d3e3fd;
  color: #041e49;
  font-weight: 700;
}
td:nth-child(2), td:nth-child(7) {
  text-align: left;
}
td:nth-child(2), td:nth-child(4), td:nth-child(7), .heading td {
  font-size: 19px;
}
.cut th, .cut td {
  height: 21px;
  padding-bottom: 6px;
  line-height: 14px;
}
.section th, .section td {
  height: 29px;
}
.green {
  background-color: #00ff00;
  border-color: #00ff00;
}
.heading th, .heading td {
  height: 36px;
}
.heading td {
  vertical-align: bottom;
  padding: 0 2px 2px;
}
.heading td:nth-child(2) {
  padding-left: 4px;
}
.heading td:nth-child(-n+6) {
  background-color: #ffff00;
  border-color: #dede0f;
}
.heading td.used {
  background-color: #980000;
  border-color: #980000;
  padding: 0 4px 3px;
  color: #00ff00;
  font: bold 24px/26px "Liberation Sans", Arial, sans-serif;
}
td.arial {
  padding-top: 5px;
  font-family: "Liberation Sans", Arial, sans-serif;
  font-size: 18px;
}

/* scrollbars */
.vscroll, .hscroll {
  display: flex;
  color: #8c8c8c;
}
.vscroll {
  flex-direction: column;
  border-left: 1px solid #d9d9d9;
}
.vscroll-top {
  height: 33px;
  background-color: #f8f8f8;
  border-bottom: 2px solid #dadce0;
}
.vscroll-track {
  flex: 1;
  padding: 53px 1px 0;
}
.vthumb {
  height: 36px;
  border-radius: 8px;
  background-color: #dadce0;
}
.vscroll button {
  height: 22px;
  border-top: 1px solid #d9d9d9;
  background-color: #f8f8f8;
}
.hscroll-start {
  width: 63px;
  background-color: #f8f9fa;
  border-right: 1px solid #c4c4c4;
}
.hscroll-track {
  flex: 1;
  padding: 1px 2px;
}
.hthumb {
  width: 43%;
  height: 13px;
  border-radius: 7px;
  background-color: #dadce0;
}
.hscroll button {
  width: 21px;
  border-left: 1px solid #d9d9d9;
  background-color: #f8f8f8;
}
.scroll-corner {
  border: 1px solid #d9d9d9;
  border-width: 1px 0 0 1px;
  background-color: #f8f8f8;
}

/* sheet tabs */
.sheet-bar {
  display: flex;
  height: 49px;
  padding-left: 57px;
  font-size: 21px;
  font-weight: 500;
  flex-shrink: 0;
}
.sheet-btn {
  width: 54px;
}
.sheets {
  display: flex;
  margin-left: 17px;
}
.sheet-tab {
  gap: 16px;
  padding: 0 17px;
}
.sheet-tab.current {
  background-color: #e1e9f7;
  color: #0b57d0;
  font-weight: 700;
}
.side-toggle {
  width: 40px;
  margin: 5px 18px 0 auto;
}

/* windows taskbar */
.taskbar {
  display: flex;
  height: 50px;
  background-color: #101010;
  color: #fff;
  font-family: "Open Sans", "Segoe UI", sans-serif;
  font-size: 16px;
  flex-shrink: 0;
}
.start {
  width: 60px;
}
.search {
  display: flex;
  align-items: center;
  width: 360px;
  padding: 0 14px;
  gap: 13px;
  border: 1px solid #5c5c5c;
  background-color: #3e3e3e;
}
.search input {
  flex: 1;
  min-width: 0;
  font-size: 17px;
}
.search input::placeholder {
  color: #d0d0d0;
  opacity: 1;
}
.apps {
  display: flex;
}
.apps button {
  position: relative;
  width: 62px;
}
.apps .open::after {
  content: "";
  position: absolute;
  bottom: 0;
  width: 51px;
  height: 3px;
  background-color: #76b9ed;
}
.apps .stacked::after {
  background: linear-gradient(90deg, #76b9ed 40px, #5a87ab 40px);
}
.apps .focused {
  background-color: #343434;
}
.apps .focused::after {
  width: 100%;
}
.count, .mini {
  position: absolute;
  right: 4px;
  bottom: 3px;
  width: 23px;
  height: 23px;
  border: 1px solid #8a8a8a;
  border-radius: 50%;
  background-color: #2b2b2b;
  font-size: 14px;
  line-height: 20px;
  text-align: center;
}
.mini {
  right: 14px;
  bottom: 7px;
  width: 20px;
  height: 20px;
  border: 0;
  background-color: #ef6c00;
  font-size: 11px;
}
.mini.photo {
  background: radial-gradient(circle at 50% 45%, #c9a58c 4px, #3b3531 5px, #8d8a86 10px);
}
.tray {
  display: flex;
  margin-left: auto;
  padding-right: 30px;
}
.tray button {
  margin-left: 14px;
}
.tray .weather {
  gap: 10px;
  margin-right: 18px;
}
.tray .volume {
  margin-left: 8px;
}
.tray .lang {
  margin-left: 12px;
  font-size: 15px;
}
.tray .clock {
  flex-direction: column;
  margin: 0 11px 0 16px;
  font-size: 14px;
  line-height: 23px;
}
```
